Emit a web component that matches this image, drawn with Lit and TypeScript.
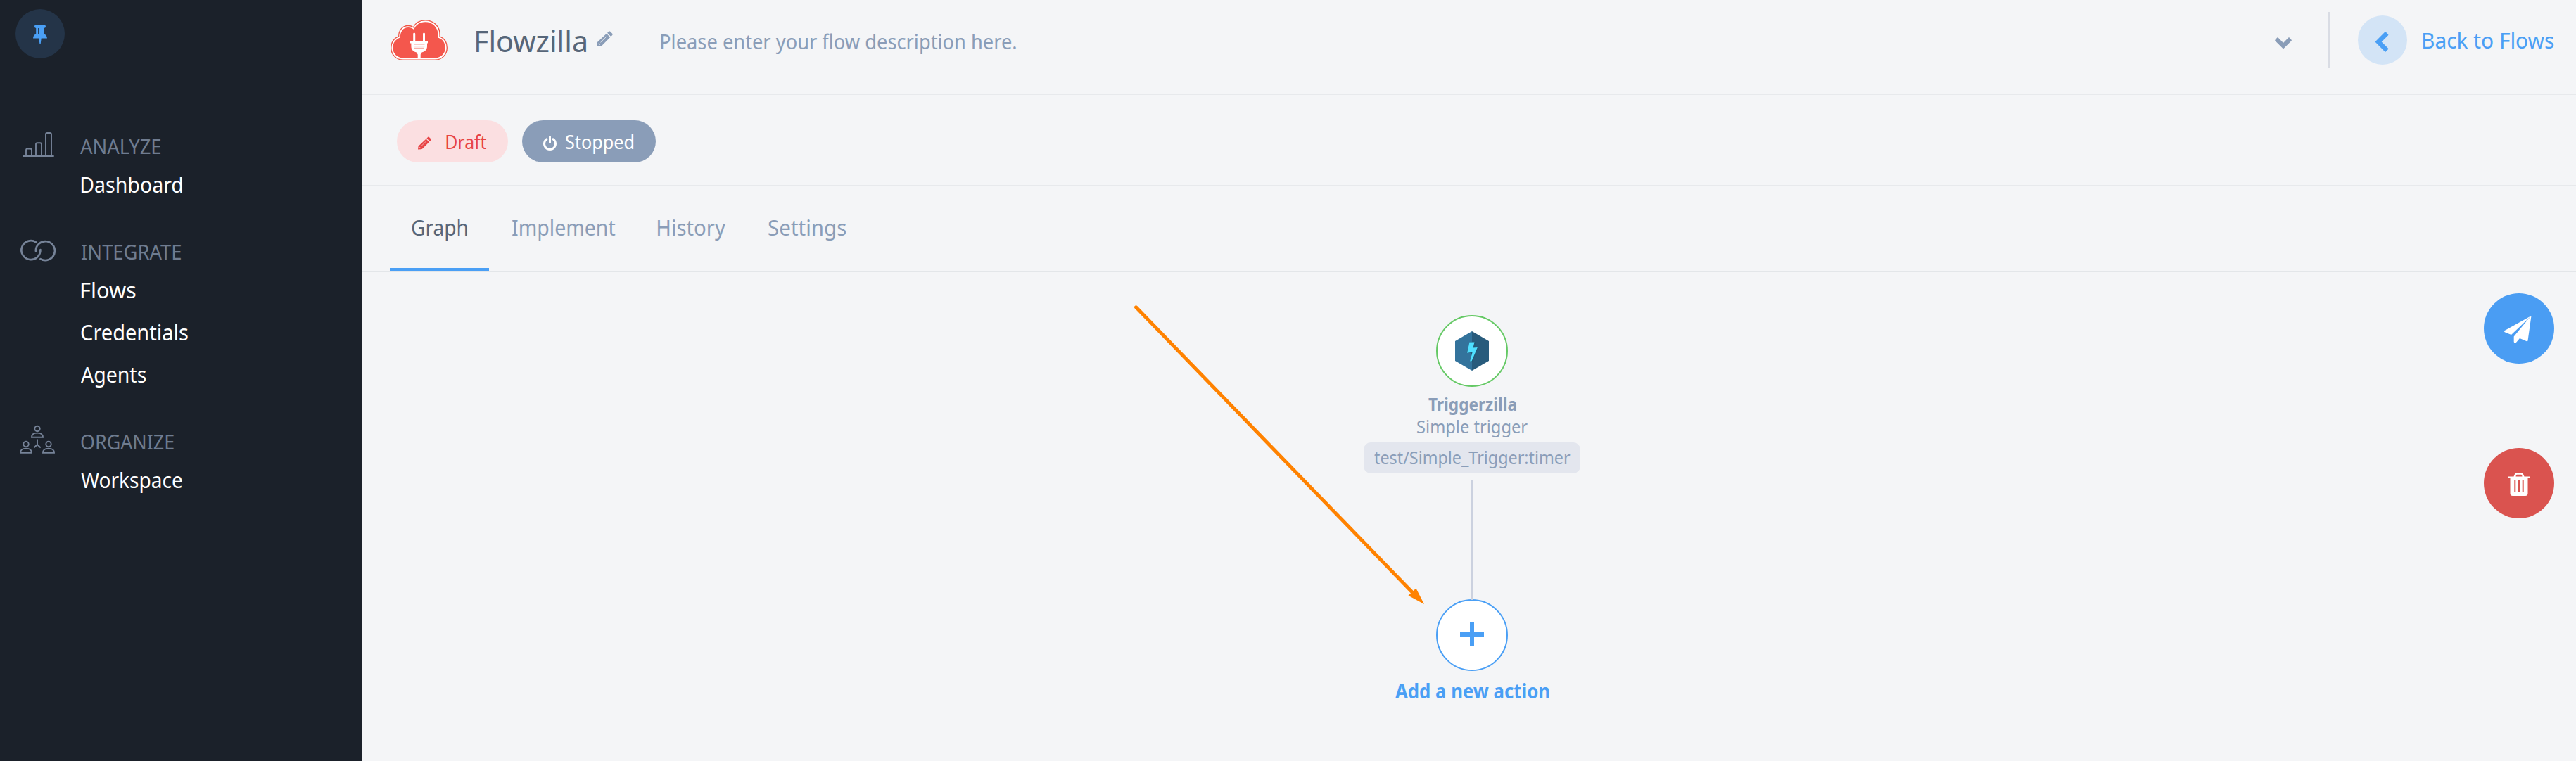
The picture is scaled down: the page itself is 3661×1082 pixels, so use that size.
import { LitElement, html, svg, css } from "lit";
import { customElement, property } from "lit/decorators.js";

/** One line of text whose visible ink spans exactly `ink` pixels. */
@customElement("fit-text")
class FitText extends LitElement {
  @property({ type: Number }) ink = 100;
  @property() text = "";
  static styles = css`
    :host { display: block; white-space: nowrap; flex: none; }
    .line { display: block; width: max-content; transform-origin: 0 50%; }
  `;
  render() {
    return html`<span class="line">${this.text}</span>`;
  }
  updated() {
    const line = this.renderRoot.querySelector(".line") as HTMLElement;
    const cs = getComputedStyle(line);
    const ctx = document.createElement("canvas").getContext("2d")!;
    ctx.font = `${cs.fontWeight} ${cs.fontSize} ${cs.fontFamily}`;
    const m = ctx.measureText(this.text);
    const natural = m.actualBoundingBoxLeft + m.actualBoundingBoxRight;
    const scale = this.ink / natural;
    this.style.width = `${this.ink}px`;
    line.style.transform = `scaleX(${scale}) translateX(${m.actualBoundingBoxLeft}px)`;
  }
}

const t = (cls: string, text: string, ink: number) =>
  html`<fit-text class=${cls} .text=${text} .ink=${ink}></fit-text>`;

const pencil = (cls: string) => html`
  <svg class=${cls} viewBox="0 0 23 22">
    <path fill="currentColor" d="M15.1 2.7 17 .8Q18-.3 19.200 .8L22.200 3.800Q23.300 5 22.200 6.100L20.300 8Z"/>
    <path fill="currentColor" d="M14 3.800 19.200 9.100 7.300 21 5.800 21.600 0 22 .7 16.200 1.500 15.500Z"/>
    <path class="cut" fill="none" stroke-width=".8" d="M5.500 16.300 14.600 7.300M2.500 18.200 4 18.600 4.300 20"/>
  </svg>`;

const person = (x: number, y: number) => svg`
  <circle cx=${x} cy=${y} r="3.700"/>
  <path d="M${x - 8} ${y + 12.300}c0-4.400 3.400-6.200 8-6.200s8 1.800 8 6.200z"/>`;

const icons: Record<string, unknown> = {
  analyze: html`<svg class="gicon" viewBox="0 0 114 48">
    <path d="M33 38h43M37 38V29.500q0-2 2-2h4q2 0 2 2V38M51 38V21.300q0-2 2-2h4q2 0 2 2V38M65 38V7q0-2 2-2h4q2 0 2 2V38" stroke-width="1.900" stroke-linecap="round"/></svg>`,
  integrate: html`<svg class="gicon" viewBox="0 0 114 48">
    <path d="M51.200 10.300A13.500 13.500 0 1 0 57.400 21M57.400 34.100A13.500 13.500 0 1 0 50.900 23" stroke-width="2.700" stroke-linecap="round"/></svg>`,
  organize: html`<svg class="gicon" viewBox="0 0 114 48">
    <g stroke-width="1.900">${person(53, 5.500)}${person(37, 27.500)}${person(69, 27.500)}
    <path d="M53 20.500V28L48.300 32.500M53 28l4.700 4.500"/></g></svg>`,
};

const groups = [
  { icon: "analyze", title: "ANALYZE", ink: 114.500, pad: 0, items: [["Dashboard", 143, 1.500]] },
  { icon: "integrate", title: "INTEGRATE", ink: 141.500, pad: 2, items: [["Flows", 77, 1.500], ["Credentials", 152, 0.500], ["Agents", 92.500, 0]] },
  { icon: "organize", title: "ORGANIZE", ink: 132, pad: 1, items: [["Workspace", 143.500, 0]] },
] as { icon: string; title: string; ink: number; pad: number; items: [string, number, number][] }[];

@customElement("app-root")
class AppRoot extends LitElement {
  static styles = css`
    :host { display: block; font-family: "Noto Sans", "Open Sans", sans-serif; color: #8a9db8; }
    * { box-sizing: border-box; }
    svg { display: block; flex: none; overflow: visible; }
    .page { display: flex; width: 3661px; height: 1082px; background: #f4f5f7; overflow: hidden; }
    .side { width: 514px; flex: none; background: #1b212a; padding-top: 13px; }
    .pin { width: 70px; height: 70px; margin: 0 0 101px 22px; border-radius: 50%; background: #243448; padding: 22px 0 0 25px; }
    .pin svg { width: 20px; height: 28px; }
    .group { margin-bottom: 42px; }
    .ghead { display: flex; height: 48px; font-size: 29px; line-height: 48px; color: #6f7c90; }
    .gicon { width: 114px; height: 48px; fill: none; stroke: #768398; }
    .item { display: block; height: 60px; font-size: 31px; line-height: 60px; color: #fff; }
    .main { flex: 1; display: flex; flex-direction: column; min-width: 0; }
    .head { display: flex; height: 135px; border-bottom: 2px solid #e7e9ec; padding-left: 41px; }
    .logo { width: 81px; height: 58px; margin: 28px 40px 0 0; }
    .title { font-size: 41px; line-height: 60px; color: #576679; margin: 28px 15px 0 0; }
    .edit { width: 23px; height: 22px; margin: 44px 68px 0 0; }
    .cut { stroke: #f4f5f7; }
    .desc { font-size: 29px; line-height: 50px; margin-top: 34px; }
    .space { flex: 1; }
    .down { width: 24px; height: 17px; margin: 53px 52px 0 0; }
    .rule { width: 2px; height: 80px; background: #d9dce4; margin: 17px 40px 0 0; }
    .back { display: flex; color: #4a9ff5; margin-right: 31.500px; }
    .disc { width: 70px; height: 70px; border-radius: 50%; background: #d3e4f6; margin: 22px 23px 0 0; padding: 23px 0 0 24px; }
    .disc svg { width: 20px; height: 29px; }
    .backtext { font-size: 31px; line-height: 60px; margin-top: 27px; }
    .status { display: flex; gap: 20px; height: 130px; border-bottom: 2px solid #e7e9ec; padding: 36px 0 0 50px; }
    .pill { display: flex; align-items: center; height: 60px; border-radius: 30px; font-size: 28px; line-height: 60px; }
    .draft { width: 158px; padding-left: 30px; background: #fbdfe1; color: #e84446; }
    .draft svg { width: 19px; height: 19px; margin: 4px 21px 0 0; }
    .draft .cut { stroke: #fbdfe1; }
    .stop { width: 190px; padding-left: 30px; background: #8a9db8; color: #fff; }
    .stop svg { width: 19px; height: 21px; margin: 4px 13px 0 0; }
    .tabs { display: flex; height: 122px; border-bottom: 2px solid #e3e6e9; padding-left: 40px; }
    .tab { height: 120px; padding: 28px 28.500px 0 32.500px; font-size: 31px; line-height: 60px; }
    .tab.on { color: #576679; border-bottom: 4px solid #4a9ff5; padding: 28px 31px 0 31px; }
    .board { flex: 1; position: relative; display: flex; justify-content: center; }
    .flow { display: flex; flex-direction: column; align-items: center; padding: 61px 0 0 9px; }
    .node { width: 102px; height: 102px; border-radius: 50%; border: 2px solid #65c965; background: #fff; display: flex; align-items: center; justify-content: center; flex: none; }
    .node.add { border-color: #4a9ff5; }
    .hex { width: 48px; height: 56px; }
    .plus { width: 34px; height: 34px; margin-top: -2px; }
    .name { font-size: 24.500px; font-weight: 700; line-height: 32px; margin-top: 9px; }
    .kind { font-size: 24.500px; line-height: 32px; }
    .tag { display: flex; justify-content: center; width: 308px; height: 44px; border-radius: 10px; background: #e3e6ee; font-size: 24.500px; line-height: 44px; margin-top: 6px; }
    .link { width: 4px; height: 170px; background: #cbd1df; margin: 10px 0 -1px; z-index: 1; }
    .addtext { font-size: 28px; font-weight: 700; line-height: 50px; color: #4a9ff5; margin-top: 3px; }
    .arrow { position: absolute; left: 1098px; top: 43px; width: 416px; height: 430px; }
    .tools { position: absolute; right: 31px; top: 30px; display: flex; flex-direction: column; gap: 120px; }
    .tool { width: 100px; height: 100px; border-radius: 50%; background: #4a9df3; color: #fff; display: flex; align-items: center; justify-content: center; }
    .tool.del { background: #da534f; }
    .plane { width: 39px; height: 39px; margin: 3px 0 0 -3px; }
    .trash { width: 30px; height: 33px; margin-top: 3px; }
  `;

  render() {
    return html`<div class="page">
      <nav class="side">
        <div class="pin"><svg viewBox="0 0 20 28"><path fill="#4a9ff5" d="M4 0h11.500Q18 .2 18 2.500T15.600 5v8.200Q19.500 14.500 20 19.500H11.700L10.600 28H9.500L8.300 19.500H0Q.3 14.500 4.200 13.200V5Q2 4.800 2 2.500T4 0Z"/><path stroke="#243448" stroke-width=".9" d="M7.500 5v8.500"/></svg></div>
        ${groups.map((g) => html`<section class="group">
          <div class="ghead">${icons[g.icon]}<span style="width:${g.pad}px"></span>${t("", g.title, g.ink)}</div>
          ${g.items.map(([label, ink, pad]) => html`<a class="item" style="padding-left:${114.500 + pad}px">${t("", label, ink)}</a>`)}
        </section>`)}
      </nav>
      <main class="main">
        <header class="head">
          <svg class="logo" viewBox="0 0 81 58">
            <path fill="#fff" stroke="#ef5444" stroke-width="1.300" d="M18 57.200C8 57.200.8 49.500.8 40 .8 32 5.500 26 11.700 23.600 11.500 15 17 8.500 25 8.500c3 0 5.500.8 7.400 2.200C35.500 4.500 42 .8 49.500 .8 61 .8 70 9.500 70 20.500v3.300c6.300 2.500 10.300 8.500 10.300 16.200 0 9.500-7 17.200-17.300 17.200Z"/>
            <path fill="#f4574d" d="M18.500 54.500C9.500 54.500 3.300 48 3.300 40c0-7.500 4.500-12.500 10.700-14.700C13.500 17 18 11 25.300 11c3.200 0 5.800 1 7.900 3C36 7 42 3.300 49.300 3.300c10.500 0 18.300 8 18.300 18l-.1 4.200c6.500 2 10.300 7.300 10.300 14.500 0 8-6 14.500-15 14.500Z"/>
            <g fill="#fff"><rect x="32.200" y="18.500" width="3" height="13" rx="1.500"/><rect x="46" y="18.500" width="3" height="13" rx="1.500"/>
            <path d="M28 30.500h25v3H52v4.500c0 5-3.500 7.500-7.500 8.500l-1.800 3V56h-4v-6.500l-1.800-3c-4-1-7.500-3.500-7.500-8.500v-4.500H28Z"/></g>
            <path stroke="#f59a93" stroke-width="1" d="M33 35h15.500M33 37.700h15.500M34 40.300h13.500"/>
          </svg>
          ${t("title", "Flowzilla", 157)}
          ${pencil("edit")}
          ${t("desc", "Please enter your flow description here.", 505)}
          <span class="space"></span>
          <svg class="down" viewBox="0 0 24 17"><path fill="currentColor" d="M.4 3.700 3.300.6Q4 0 4.700.6L12 7.900 19.300.6Q20 0 20.700.6L23.600 3.700Q24.200 4.300 23.600 5L12 16.600.4 5Q-.2 4.300.4 3.700Z"/></svg>
          <span class="rule"></span>
          <a class="back"><span class="disc"><svg viewBox="0 0 20 29"><path fill="currentColor" d="M.5 14.500 14.400.6Q15 0 15.700.6L19.100 4Q19.600 4.600 19.100 5.200L9.700 14.500 19.100 23.800Q19.600 24.400 19.100 25L15.700 28.400Q15 29 14.400 28.400Z"/></svg></span>
          ${t("backtext", "Back to Flows", 185.500)}</a>
        </header>
        <section class="status">
          <span class="pill draft">${pencil("")}${t("", "Draft", 57.500)}</span>
          <span class="pill stop"><svg viewBox="0 0 19 21"><path fill="none" stroke="#fff" stroke-width="3" stroke-linecap="round" d="M5 4.800A8 8 0 1 0 14 4.800M9.500 1.500V9.500"/></svg>${t("", "Stopped", 96)}</span>
        </section>
        <nav class="tabs">
          <a class="tab on">${t("", "Graph", 79)}</a>
          <a class="tab">${t("", "Implement", 146.500)}</a>
          <a class="tab">${t("", "History", 96)}</a>
          <a class="tab">${t("", "Settings", 110.500)}</a>
        </nav>
        <section class="board">
          <div class="flow">
            <div class="node"><svg class="hex" viewBox="0 0 48 56"><path fill="#33739c" d="M24 0 0 14V42L24 56Z"/><path fill="#285b7c" d="M24 0 48 14V42L24 56Z"/><path fill="#235776" d="M21 15h8.500l-1.500 7.500 5 .5L24.500 43.500 21.500 43 23 30.500l-6.500-.2Z"/><path fill="#4fdfff" d="M20.500 15.500h7l-2 8 6.300-.6L23.500 42.500h-2.400L24.700 29.500l-7.700 1.200Z"/></svg></div>
            ${t("name", "Triggerzilla", 124.500)}
            ${t("kind", "Simple trigger", 157)}
            <div class="tag">${t("", "test/Simple_Trigger:timer", 278.500)}</div>
            <span class="link"></span>
            <div class="node add"><svg class="plus" viewBox="0 0 34 34"><path fill="#4a9ff5" d="M14 0h6v14h14v6H20v14h-6V20H0v-6h14Z"/></svg></div>
            ${t("addtext", "Add a new action", 219)}
          </div>
          <svg class="arrow" viewBox="0 0 416 430"><path stroke="#ff8200" stroke-width="5" stroke-linecap="round" d="M2.500 6.800 396 413"/><path fill="#ff8200" d="M412 429 400.500 406.500 389.500 416.700Z"/></svg>
          <div class="tools">
            <span class="tool"><svg class="plane" viewBox="0 0 39 39"><path fill="#fff" d="M38.500 0 .2 21.200Q-.3 22.500.7 23.200L10 27Z"/><path fill="#fff" d="M38.500 0 33.500 35.500Q33 36.500 32 36.200L22 32 16.500 38.500Q14 39.500 13.700 37V29.500L33.500 5.500Z"/></svg></span>
            <span class="tool del"><svg class="trash" viewBox="0 0 30 33"><path fill="#fff" fill-rule="evenodd" d="M0 5.500h7.500L9 2Q9.700 0 12 0h6q2.300 0 3 2l1.500 3.500H30V8H27.500V29.500Q27.500 33 24 33H6Q2.500 33 2.500 29.500V8H0ZM10.500 5.500h9L19 3.300Q18.800 2.800 18 2.800h-6q-.8 0-1 .5ZM8.300 11V27h2V11ZM14 11V27h2V11ZM19.700 11V27h2V11Z"/></svg></span>
          </div>
        </section>
      </main>
    </div>`;
  }
}
